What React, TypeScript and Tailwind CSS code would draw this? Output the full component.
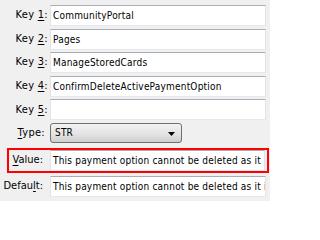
import React from "react";

const font = { fontFamily: '"DejaVu Sans Condensed", "DejaVu Sans", sans-serif' };

function Label({ pre, u, post, wide = true }: { pre: string; u: string; post: string; wide?: boolean }) {
  return (
    <span className={`text-right text-[11px] text-black whitespace-nowrap ${wide ? "tracking-[0.3px]" : "tracking-[0px]"}`}>
      {pre}
      <span className="underline underline-offset-2">{u}</span>
      {post}
    </span>
  );
}

function TextBox({ value }: { value: string }) {
  return (
    <div className="h-[21px] flex-1 min-w-0 bg-white border border-t-[#abadb3] border-x-[#e2e3ea] border-b-[#e3e9ef] flex items-center pl-[2px] overflow-hidden whitespace-nowrap text-[10px] tracking-[0.2px] text-black">
      {value}
    </div>
  );
}

export default function App() {
  const keys = ["CommunityPortal", "Pages", "ManageStoredCards", "ConfirmDeleteActivePaymentOption", ""];
  const msg = "This payment option cannot be deleted as it is linked to an active subscription";
  return (
    <div className="w-[270px] h-[201px] bg-[#f0f0f0] overflow-hidden" style={font}>
      <div className="flex flex-col gap-[2.6px] pt-[5px]">
        {keys.map((k, i) => (
          <div key={i} className="flex items-center pr-[4px]">
            <div className="w-[50px] flex justify-end pr-[2px]">
              <Label pre="Key " u={String(i + 1)} post=":" />
            </div>
            <TextBox value={k} />
          </div>
        ))}
        {/* type dropdown */}
        <div className="flex items-center">
          <div className="w-[50px] flex justify-end pr-[5px]">
            <Label pre="" u="T" post="ype:" />
          </div>
          <div className="relative h-[20px] w-[132px] rounded-[3px] border border-[#707070] bg-gradient-to-b from-[#f2f2f2] via-[#e5e5e5] to-[#cfcfcf] flex items-center pl-[4px] text-[10px] tracking-[0.2px] text-black">
            STR
            <svg className="absolute right-[6px] top-[8px]" width="7" height="4" viewBox="0 0 7 4">
              <path d="M0 0h7L3.5 4z" fill="#000" />
            </svg>
          </div>
        </div>
      </div>
      {/* value, highlighted */}
      <div className="mt-[5px] ml-[7px] mr-[1px] h-[25px] border-2 border-[#ff0000] flex items-center pr-[2px]">
        <div className="w-[41px] flex justify-end pr-[7px]">
          <Label pre="" u="V" post="alue:" wide={false} />
        </div>
        <TextBox value={msg} />
      </div>
      <div className="mt-[3px] flex items-center pr-[4px]">
        <div className="w-[50px] flex justify-end pr-[7px]">
          <Label pre="Defau" u="l" post="t:" wide={false} />
        </div>
        <TextBox value={msg} />
      </div>
    </div>
  );
}
